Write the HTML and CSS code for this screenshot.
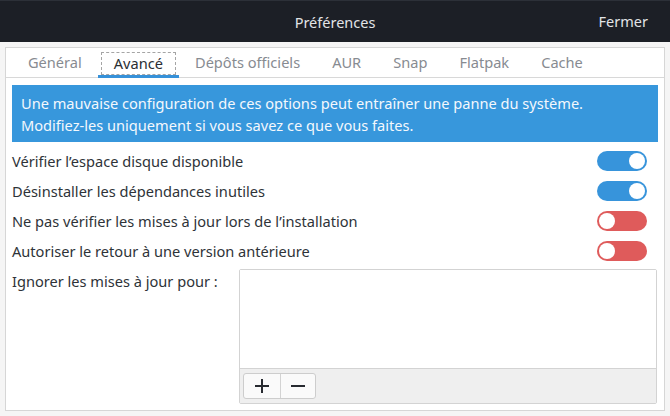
FILE: index.html
```html
<!DOCTYPE html>
<html lang="fr">
<head>
<meta charset="utf-8">
<title>Préférences</title>
<link rel="stylesheet" href="styles.css">
</head>
<body>
<header class="titlebar">
  <span class="title">Préférences</span>
  <span class="close">Fermer</span>
</header>
<main class="frame">
  <section class="panel">
    <nav class="tabs">
      <span class="tab">Général</span>
      <span class="tab active"><span class="focus">Avancé</span></span>
      <span class="tab">Dépôts officiels</span>
      <span class="tab">AUR</span>
      <span class="tab">Snap</span>
      <span class="tab">Flatpak</span>
      <span class="tab">Cache</span>
    </nav>
    <div class="page">
      <div class="banner">Une mauvaise configuration de ces options peut entraîner une panne du système.<br>Modifiez-les uniquement si vous savez ce que vous faites.</div>
      <div class="row"><span>Vérifier l’espace disque disponible</span><span class="switch on"><span class="knob"></span></span></div>
      <div class="row"><span>Désinstaller les dépendances inutiles</span><span class="switch on"><span class="knob"></span></span></div>
      <div class="row"><span>Ne pas vérifier les mises à jour lors de l’installation</span><span class="switch off"><span class="knob"></span></span></div>
      <div class="row"><span>Autoriser le retour à une version antérieure</span><span class="switch off"><span class="knob"></span></span></div>
      <div class="ignore">
        <span class="ignore-label">Ignorer les mises à jour pour :</span>
        <div class="listbox">
          <div class="list"></div>
          <div class="toolbar">
            <div class="btngroup">
              <span class="btn" title="Ajouter"><svg width="16" height="16" viewBox="0 0 16 16"><path d="M8 1v14M1 8h14" stroke="#272a30" stroke-width="2" fill="none"/></svg></span>
              <span class="btn" title="Retirer"><svg width="16" height="16" viewBox="0 0 16 16"><path d="M1 8h14" stroke="#272a30" stroke-width="2" fill="none"/></svg></span>
            </div>
          </div>
        </div>
      </div>
    </div>
  </section>
</main>
</body>
</html>
```
FILE: styles.css
```css
* { box-sizing: border-box; }
html, body { margin: 0; height: 100%; }
body {
  font-family: "Noto Sans", "Open Sans", sans-serif;
  font-size: 14.6px;
  color: #2e3338;
  background: #f5f5f5;
  display: flex;
  flex-direction: column;
}
.titlebar {
  height: 42px;
  background: #1c1f26;
  border-top: 1px solid #2c3038;
  color: #e2e4e6;
  display: flex;
  align-items: center;
  justify-content: center;
  position: relative;
  font-size: 14.5px;
}
.close {
  position: absolute;
  right: 22px;
  top: 10px;
}
.frame {
  flex: 1;
  padding: 5px;
  display: flex;
}
.panel {
  flex: 1;
  background: #fff;
  border: 1px solid #d6d6d6;
  display: flex;
  flex-direction: column;
}
.tabs {
  height: 30px;
  display: flex;
  border-bottom: 1px solid #d8d8d8;
  padding-left: 6px;
}
.tab {
  padding: 0 16px 2px 16px;
  display: flex;
  align-items: center;
  color: #878b91;
  height: 30px;
}
.tab.active {
  color: #2a2e33;
  border-bottom: 3px solid #3691d9;
  height: 30px;
  padding: 3px 3px 0 3px;
  margin-bottom: -1px;
}
.focus {
  border: 1px dashed #a5a5a5;
  padding: 0 12px 1px 12px;
  height: 23px;
  display: flex;
  align-items: center;
}
.page {
  flex: 1;
  padding: 7px 6px 6px 6px;
  display: flex;
  flex-direction: column;
}
.banner {
  background: #3797dc;
  color: #f4f8fc;
  line-height: 22px;
  padding: 7px 9px 6px 9px;
  margin-bottom: 4px;
}
.row {
  height: 30px;
  display: flex;
  align-items: center;
  justify-content: space-between;
  padding-right: 11px;
}
.switch {
  width: 50px;
  height: 20px;
  border-radius: 10px;
  padding: 2px;
  display: flex;
}
.switch.on { background: #3794db; justify-content: flex-end; }
.switch.off { background: #df5b5b; justify-content: flex-start; }
.knob {
  width: 16px;
  height: 16px;
  border-radius: 50%;
  background: #fff;
}
.ignore {
  flex: 1;
  margin-top: 3px;
  display: grid;
  grid-template-columns: 227px 1fr;
  padding-right: 1px;
}
.ignore-label {
  padding-top: 1px;
  line-height: 22px;
}
.listbox {
  border: 1px solid #d3d3d3;
  border-radius: 2px;
  display: flex;
  flex-direction: column;
}
.list { flex: 1; background: #fff; }
.toolbar {
  height: 35px;
  background: #efefef;
  border-top: 1px solid #d3d3d3;
  padding: 4px 3px;
  display: flex;
}
.btngroup {
  display: flex;
  border: 1px solid #cdcdcd;
  border-radius: 3px;
  background: #fafafa;
  height: 26px;
}
.btn {
  width: 36px;
  display: flex;
  align-items: center;
  justify-content: center;
}
.btn + .btn { border-left: 1px solid #d3d3d3; width: 35px; }
```
